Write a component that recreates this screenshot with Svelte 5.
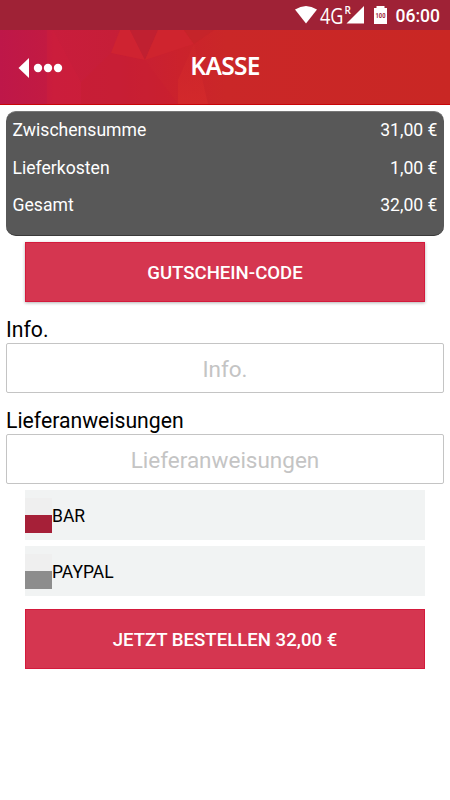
<script lang="ts">
  interface Total {
    label: string;
    value: string;
  }

  interface Payment {
    id: string;
    label: string;
  }

  const totals: Total[] = [
    { label: 'Zwischensumme', value: '31,00 €' },
    { label: 'Lieferkosten', value: '1,00 €' },
    { label: 'Gesamt', value: '32,00 €' },
  ];

  const payments: Payment[] = [
    { id: 'bar', label: 'BAR' },
    { id: 'paypal', label: 'PAYPAL' },
  ];

  let selected = $state('bar');
  let info = $state('');
  let instructions = $state('');
</script>

<div class="screen">
  <div class="status">
    <svg class="status__icons" width="96" height="30" viewBox="0 0 96 30" aria-hidden="true">
      <path d="M0 9.5 Q11 2.5 22 9.5 L11 23.5 Z" fill="#fff" />
      <text x="25" y="23.5" class="status__network" textLength="23.5" lengthAdjust="spacingAndGlyphs">4G</text>
      <text x="49.5" y="13.5" class="status__roaming">R</text>
      <path d="M69 6 V23.5 H51.5 Z" fill="#fff" />
      <path d="M79 8 H81.5 V6 H89.5 V8 H92 V24 H79 Z" fill="#fff" />
      <text x="80.5" y="17.5" class="status__level" textLength="10" lengthAdjust="spacingAndGlyphs">100</text>
    </svg>
    <span class="status__time">06:00</span>
  </div>

  <header class="header">
    <svg class="header__art" width="450" height="74" viewBox="0 0 450 74" preserveAspectRatio="none" aria-hidden="true">
      <defs>
        <linearGradient id="base">
          <stop offset="0" stop-color="#be1749" />
          <stop offset="0.1" stop-color="#c21a42" />
          <stop offset="0.12" stop-color="#c91d3c" />
          <stop offset="0.25" stop-color="#c61e38" />
          <stop offset="0.4" stop-color="#cb222c" />
          <stop offset="0.5" stop-color="#ca2728" />
          <stop offset="1" stop-color="#c92724" />
        </linearGradient>
        <linearGradient id="facet" x1="0" y1="0" x2="0" y2="1">
          <stop offset="0" stop-color="#d42a2b" stop-opacity="0.2" />
          <stop offset="1" stop-color="#d42a2b" stop-opacity="0.8" />
        </linearGradient>
      </defs>
      <rect width="450" height="74" fill="url(#base)" />
      <path d="M53 0 L81 52 V74 H47 V0 Z" fill="#cf1f3c" opacity="0.4" />
      <path d="M81 52 L111 23 L145 30 L178 74 H81 Z" fill="#c91f32" opacity="0.4" />
      <path d="M120 0 H130 L145 30 L111 23 Z" fill="#cf2331" />
      <path d="M130 0 H158 L145 30 Z" fill="#c02031" />
      <path d="M158 0 H184 L194 14 L145 30 Z" fill="#cf242e" />
      <path d="M184 0 H214 L194 14 Z" fill="#c5242a" />
      <path d="M194 14 L178 50 V74 H208 Z" fill="url(#facet)" />
    </svg>
    <button class="header__back" aria-label="Zurück">
      <svg width="46" height="22" viewBox="0 0 46 22" fill="#fff">
        <path d="M0.5 12 L11 2 V22 Z" />
        <circle cx="20" cy="12" r="4.2" />
        <circle cx="30" cy="12" r="4.2" />
        <circle cx="40" cy="12" r="4.2" />
      </svg>
    </button>
    <h1 class="header__title">KASSE</h1>
  </header>

  <main class="content">
    <dl class="totals">
      {#each totals as total}
        <div class="totals__row">
          <dt>{total.label}</dt>
          <dd>{total.value}</dd>
        </div>
      {/each}
    </dl>

    <button class="action action--raised">GUTSCHEIN-CODE</button>

    <label class="field">
      <span class="field__label">Info.</span>
      <input class="field__input" placeholder="Info." bind:value={info} />
    </label>

    <label class="field">
      <span class="field__label">Lieferanweisungen</span>
      <input class="field__input" placeholder="Lieferanweisungen" bind:value={instructions} />
    </label>

    <div class="payments">
      {#each payments as payment}
        <button class="payment" onclick={() => (selected = payment.id)}>
          <span class="payment__mark" class:payment__mark--on={selected === payment.id}></span>
          <span class="payment__label">{payment.label}</span>
        </button>
      {/each}
    </div>

    <button class="action">JETZT BESTELLEN 32,00 €</button>
  </main>
</div>

<style>
  :global(body) {
    background: #fff;
  }

  .screen {
    width: 450px;
    height: 800px;
    overflow: hidden;
    background: #fff;
    color: #000;
    font-family: Roboto, sans-serif;
  }

  button {
    border: 0;
    padding: 0;
    font-family: inherit;
    cursor: pointer;
  }

  .status {
    display: flex;
    justify-content: flex-end;
    align-items: center;
    height: 30px;
    padding-right: 10px;
    background: #9f2236;
    color: #fff;
  }

  .status__icons {
    margin-right: 5px;
  }

  .status__network {
    fill: #fff;
    font: 400 22.5px "Open Sans", sans-serif;
  }

  .status__roaming {
    fill: #fff;
    font: 600 10px "Open Sans", sans-serif;
  }

  .status__level {
    fill: #9f2236;
    font: 700 6.5px Roboto, sans-serif;
  }

  .status__time {
    font-size: 17.5px;
    font-weight: 500;
    line-height: 30px;
    padding-top: 1px;
  }

  .header {
    position: relative;
    display: grid;
    grid-template-columns: 1fr auto 1fr;
    align-items: center;
    box-sizing: border-box;
    height: 75px;
    border-bottom: 1px solid #c80508;
  }

  .header__art {
    position: absolute;
    inset: 0;
  }

  .header__back {
    position: relative;
    justify-self: start;
    height: 22px;
    margin-left: 18px;
    background: none;
  }

  .header__back svg {
    display: block;
  }

  .header__title {
    position: relative;
    margin: 0 0 3px;
    color: #fff;
    font: 600 24.5px/30px "Noto Sans", sans-serif;
    letter-spacing: -0.7px;
  }

  .content {
    display: flex;
    flex-direction: column;
    padding: 6px 6px 0;
  }

  .totals {
    box-sizing: border-box;
    height: 125px;
    margin: 0 0 6px;
    padding: 0 6.5px;
    border-top: 1px solid #777;
    border-bottom: 1px solid #3a3a3a;
    border-radius: 10px;
    background: #585858;
    color: #fff;
    font-size: 17.6px;
    line-height: 37.5px;
  }

  .totals__row {
    display: flex;
    justify-content: space-between;
  }

  .totals dd {
    margin: 0;
  }

  .action {
    box-sizing: border-box;
    height: 60px;
    margin: 0 19px;
    padding-top: 2px;
    border: 1px solid #d41a3c;
    background: #d53650;
    color: #fff;
    font-size: 18.6px;
    font-weight: 500;
  }

  .action--raised {
    box-shadow: 0 1px 3px rgba(0, 0, 0, 0.3);
  }

  .field {
    display: block;
  }

  .field__label {
    display: block;
    height: 26px;
    padding-top: 15px;
    font-size: 21.2px;
    line-height: 26px;
  }

  .field__input {
    display: block;
    box-sizing: border-box;
    width: 100%;
    height: 50px;
    padding: 2px 0 0;
    border: 1px solid #c4c4c4;
    border-radius: 2px;
    background: #fff;
    font-family: inherit;
    font-size: 22.5px;
    text-align: center;
  }

  .field__input::placeholder {
    color: #c4c4c4;
    opacity: 1;
  }

  .payments {
    display: flex;
    flex-direction: column;
    gap: 6px;
    margin: 6px 19px 13px;
  }

  .payment {
    display: flex;
    align-items: center;
    height: 50px;
    background: #f1f3f3;
    color: #000;
    font-size: 17.5px;
  }

  .payment__label {
    padding-top: 2px;
  }

  .payment__mark {
    width: 27px;
    height: 18px;
    border-top: 17px solid #efefef;
    background: #8d8d8d;
  }

  .payment__mark--on {
    background: #a62038;
  }
</style>
